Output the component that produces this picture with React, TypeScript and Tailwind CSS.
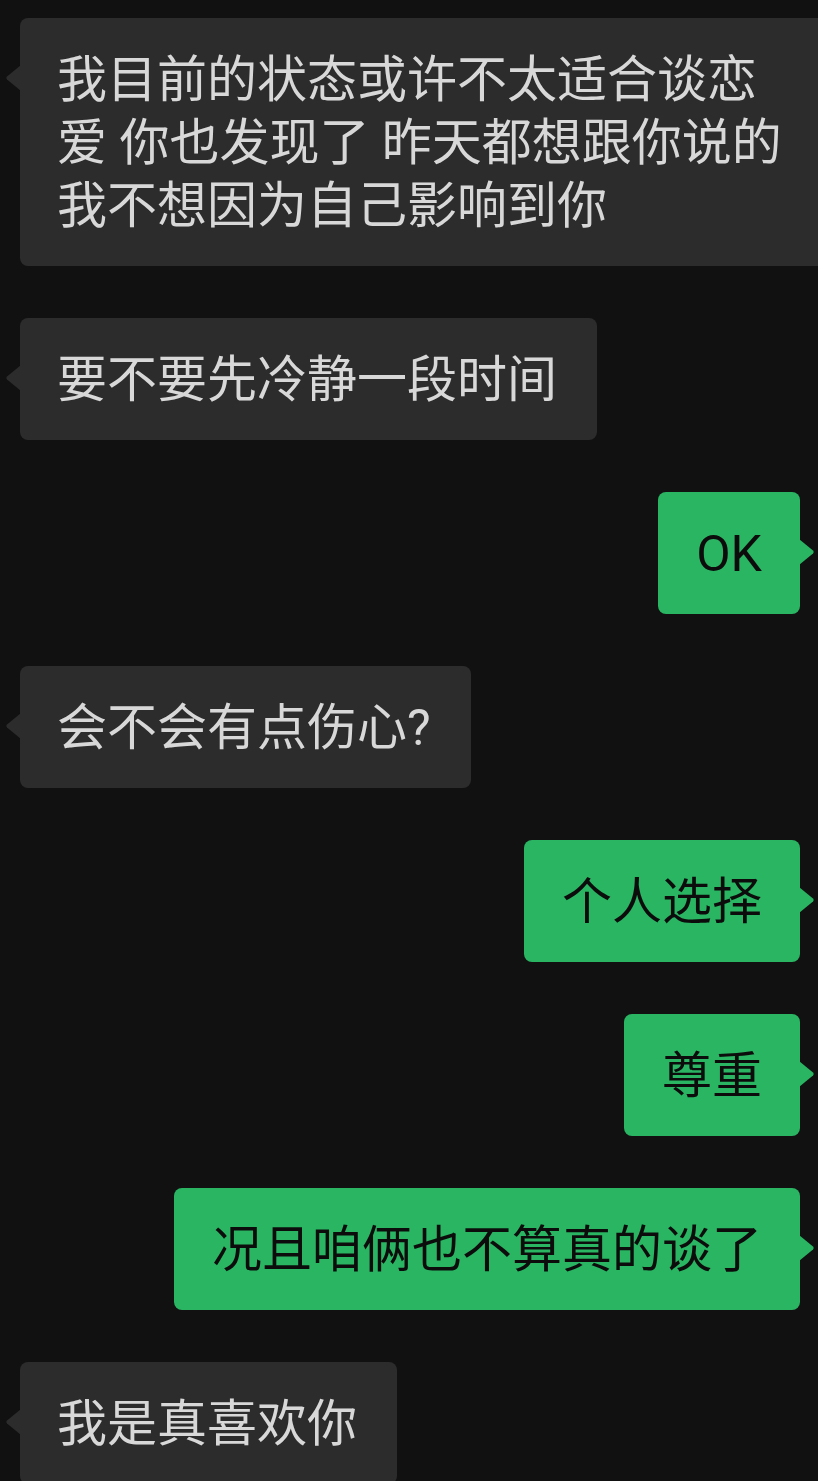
import React from "react";

type Msg = { side: "l" | "r"; text: React.ReactNode; wide?: boolean };

const msgs: Msg[] = [
  { side: "l", text: "我目前的状态或许不太适合谈恋爱 你也发现了 昨天都想跟你说的我不想因为自己影响到你", wide: true },
  { side: "l", text: "要不要先冷静一段时间" },
  { side: "r", text: "OK" },
  { side: "l", text: "会不会有点伤心?" },
  { side: "r", text: "个人选择" },
  { side: "r", text: "尊重" },
  { side: "r", text: "况且咱俩也不算真的谈了" },
  { side: "l", text: "我是真喜欢你" },
];

function Tail({ side, color }: { side: "l" | "r"; color: string }) {
  if (side === "l") {
    return (
      <svg
        className="absolute top-[44px] left-[-15px]"
        width="16"
        height="32"
        viewBox="0 0 16 32"
      >
        <path d="M16 3 L2 14.5 Q0.5 16 2 17.5 L16 29 Z" fill={color} />
      </svg>
    );
  }
  return (
    <svg
      className="absolute top-[44px] right-[-15px]"
      width="16"
      height="32"
      viewBox="0 0 16 32"
    >
      <path d="M0 3 L14 14.5 Q15.5 16 14 17.5 L0 29 Z" fill={color} />
    </svg>
  );
}

export default function App() {
  return (
    <div
      className="w-[818px] h-[1481px] overflow-hidden bg-[#111111]"
      style={{ fontFamily: 'Roboto, "Noto Sans CJK SC", sans-serif' }}
    >
      <div className="flex flex-col gap-[52px] pt-[18px]">
        {msgs.map((m, i) =>
          m.side === "l" ? (
            <div key={i} className="flex pl-[20px]">
              <div
                className={
                  "relative shrink-0 rounded-[8px] bg-[#2c2c2c] pl-[37px] pr-[40px] pt-[31px] pb-[28px] text-[50px] leading-[63px] text-[#d8d8d8] " +
                  (m.wide ? "w-[818px]" : "")
                }
              >
                <Tail side="l" color="#2c2c2c" />
                {m.text}
              </div>
            </div>
          ) : (
            <div key={i} className="flex justify-end pr-[18px]">
              <div className="relative shrink-0 rounded-[8px] bg-[#2ab563] pl-[38px] pr-[38px] pt-[31px] pb-[28px] text-[50px] leading-[63px] text-[#0c0c0c]">
                <Tail side="r" color="#2ab563" />
                {m.text}
              </div>
            </div>
          )
        )}
      </div>
    </div>
  );
}
